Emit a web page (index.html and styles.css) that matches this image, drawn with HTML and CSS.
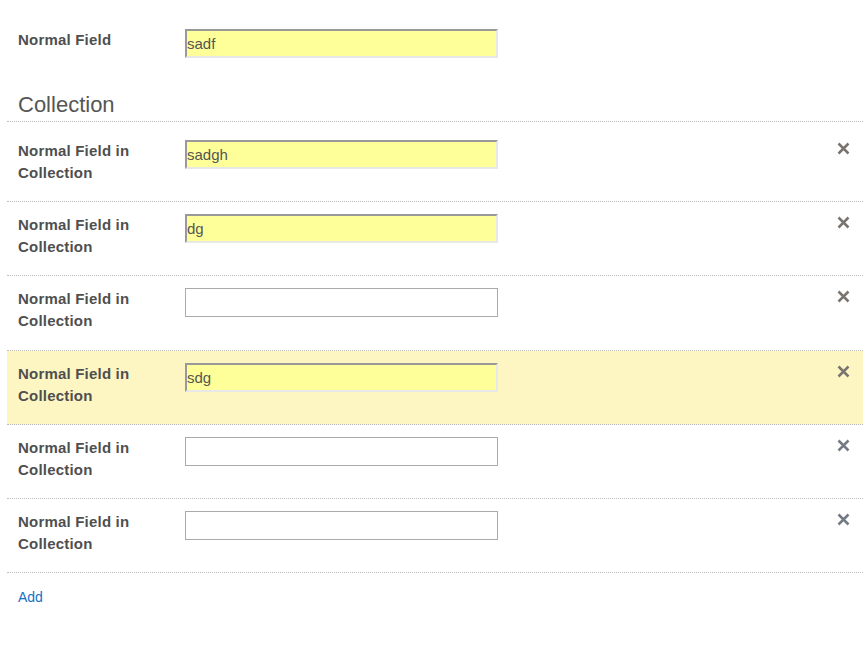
FILE: index.html
```html
<!DOCTYPE html>
<html>
<head>
<meta charset="utf-8">
<link rel="stylesheet" href="styles.css">
</head>
<body>
<div class="page">
  <div class="field top-field">
    <label class="label">Normal Field</label>
    <input class="input filled" type="text" value="sadf">
  </div>

  <h2 class="section-title">Collection</h2>

  <div class="collection">
    <div class="item first">
      <label class="label">Normal Field in Collection</label>
      <input class="input filled" type="text" value="sadgh">
      <span class="remove"><svg viewBox="0 0 13 13" width="13" height="13"><path d="M1.5 1.5L11.5 11.5M11.5 1.5L1.5 11.5"/></svg></span>
    </div>
    <div class="item">
      <label class="label">Normal Field in Collection</label>
      <input class="input filled" type="text" value="dg">
      <span class="remove"><svg viewBox="0 0 13 13" width="13" height="13"><path d="M1.5 1.5L11.5 11.5M11.5 1.5L1.5 11.5"/></svg></span>
    </div>
    <div class="item">
      <label class="label">Normal Field in Collection</label>
      <input class="input" type="text" value="">
      <span class="remove"><svg viewBox="0 0 13 13" width="13" height="13"><path d="M1.5 1.5L11.5 11.5M11.5 1.5L1.5 11.5"/></svg></span>
    </div>
    <div class="item highlighted">
      <label class="label">Normal Field in Collection</label>
      <input class="input filled" type="text" value="sdg">
      <span class="remove"><svg viewBox="0 0 13 13" width="13" height="13"><path d="M1.5 1.5L11.5 11.5M11.5 1.5L1.5 11.5"/></svg></span>
    </div>
    <div class="item">
      <label class="label">Normal Field in Collection</label>
      <input class="input" type="text" value="">
      <span class="remove alt"><svg viewBox="0 0 13 13" width="13" height="13"><path d="M1.5 1.5L11.5 11.5M11.5 1.5L1.5 11.5"/></svg></span>
    </div>
    <div class="item">
      <label class="label">Normal Field in Collection</label>
      <input class="input" type="text" value="">
      <span class="remove alt"><svg viewBox="0 0 13 13" width="13" height="13"><path d="M1.5 1.5L11.5 11.5M11.5 1.5L1.5 11.5"/></svg></span>
    </div>
  </div>

  <div class="actions">
    <a class="add-link" href="#">Add</a>
  </div>
</div>
</body>
</html>
```

FILE: styles.css
```css
html, body {
  margin: 0;
  padding: 0;
  background: #ffffff;
}

body {
  font-family: "Liberation Sans", Arial, sans-serif;
  color: #555555;
}

.page {
  width: 856px;
  margin-left: 7px;
  padding-top: 29px;
}

.field {
  display: flex;
  align-items: flex-start;
  padding-left: 11px;
}

.label {
  flex: 0 0 167px;
  font-size: 15px;
  font-weight: bold;
  line-height: 22px;
  letter-spacing: 0.2px;
  color: #4f4f4f;
}

.input {
  box-sizing: border-box;
  width: 313px;
  height: 29px;
  margin: 0;
  padding: 0 0 0 1px;
  font-family: "Liberation Sans", Arial, sans-serif;
  font-size: 15px;
  color: #555555;
  background: #ffffff;
  border: 1px solid #aaaaaa;
  outline: none;
}

.input.filled {
  background: #ffff99;
  border-width: 2px;
  border-style: solid;
  border-color: #999999 #e8e8e8 #e8e8e8 #999999;
  padding-left: 0;
}

.section-title {
  margin: 35px 0 0 0;
  padding: 0 0 4px 11px;
  font-size: 22px;
  font-weight: normal;
  line-height: 24px;
  color: #555555;
  border-bottom: 1px dotted #bbbbbb;
}

.item {
  display: flex;
  align-items: flex-start;
  padding: 12px 0 17.2px 11px;
  border-bottom: 1px dotted #bbbbbb;
}

.item.first {
  padding-top: 18px;
}

.item.highlighted {
  background: #fdf6c3;
}

.remove {
  margin-left: auto;
  margin-right: 13px;
  margin-top: 2px;
  width: 13px;
  height: 13px;
  display: block;
}

.remove svg {
  display: block;
  stroke: #7a7470;
  stroke-width: 2.5;
  fill: none;
}

.remove.alt svg {
  stroke: #737985;
}

.actions {
  padding: 15px 0 0 11px;
}

.add-link {
  font-size: 14px;
  color: #1570c8;
  text-decoration: none;
}
```
